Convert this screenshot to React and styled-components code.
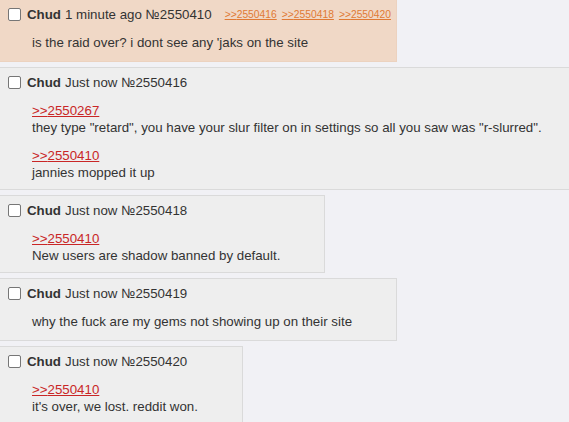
import React from "react";
import styled, { createGlobalStyle } from "styled-components";

const GlobalStyle = createGlobalStyle`
  html, body {
    margin: 0;
    padding: 0;
    background: #f1f1f5;
    overflow: hidden;
  }
  body {
    font-family: "Liberation Sans", Arial, sans-serif;
    font-size: 13.3px;
    color: #333;
  }
`;

const Thread = styled.div`
  width: 640px;
  margin-top: -1px;
  display: flex;
  flex-direction: column;
  align-items: flex-start;
  gap: 5px;
`;

const Post = styled.div`
  background: ${props => (props.highlighted ? "#f0d8c6" : "#eeeeee")};
  border: 1px solid ${props => (props.highlighted ? "#ecd2bf" : "#dadada")};
  border-left: none;
  padding-bottom: 8px;
`;

const Header = styled.div`
  display: flex;
  align-items: center;
  padding: 7px 5px 0 8px;
  line-height: 15px;
  white-space: nowrap;
`;

const Check = styled.span`
  display: inline-block;
  width: 11px;
  height: 11px;
  border: 1px solid #767676;
  border-radius: 2px;
  background: #fff;
  margin-right: 6px;
  flex: none;
`;

const Name = styled.b`
  font-weight: bold;
  margin-right: 4px;
`;

const Backlink = styled.a`
  font-size: 10.3px;
  color: #e07a34;
  text-decoration: underline;
  margin-left: ${props => props.first ? "13px" : "5px"};
`;

const Body = styled.div`
  padding: 0 44px 0 32px;
  margin-top: 12px;
  min-height: 19px;
  line-height: 17px;
  white-space: nowrap;
`;

const Para = styled.div`
  & + & {
    margin-top: 11px;
  }
`;

const Quote = styled.a`
  display: block;
  color: #c92626;
  text-decoration: underline;
  width: fit-content;
`;

const posts = [
  {
    id: "2550410",
    time: "1 minute ago",
    highlighted: true,
    backlinks: ["2550416", "2550418", "2550420"],
    paras: [{ text: "is the raid over? i dont see any 'jaks on the site" }]
  },
  {
    id: "2550416",
    time: "Just now",
    paras: [
      {
        quote: "2550267",
        text: "they type \"retard\", you have your slur filter on in settings so all you saw was \"r-slurred\"."
      },
      { quote: "2550410", text: "jannies mopped it up" }
    ]
  },
  {
    id: "2550418",
    time: "Just now",
    paras: [{ quote: "2550410", text: "New users are shadow banned by default." }]
  },
  {
    id: "2550419",
    time: "Just now",
    paras: [{ text: "why the fuck are my gems not showing up on their site" }]
  },
  {
    id: "2550420",
    time: "Just now",
    paras: [{ quote: "2550410", text: "it's over, we lost. reddit won." }]
  }
];

const App = () => {
  return (
    <>
      <GlobalStyle />
      <Thread>
        {posts.map(p => (
          <Post key={p.id} highlighted={p.highlighted}>
            <Header>
              <Check />
              <Name>Chud</Name>
              <span>{p.time} №{p.id}</span>
              {(p.backlinks || []).map((b, i) => (
                <Backlink key={b} first={i === 0}>&gt;&gt;{b}</Backlink>
              ))}
            </Header>
            <Body>
              {p.paras.map((para, i) => (
                <Para key={i}>
                  {para.quote && <Quote>&gt;&gt;{para.quote}</Quote>}
                  {para.text}
                </Para>
              ))}
            </Body>
          </Post>
        ))}
      </Thread>
    </>
  );
};

export default App;
